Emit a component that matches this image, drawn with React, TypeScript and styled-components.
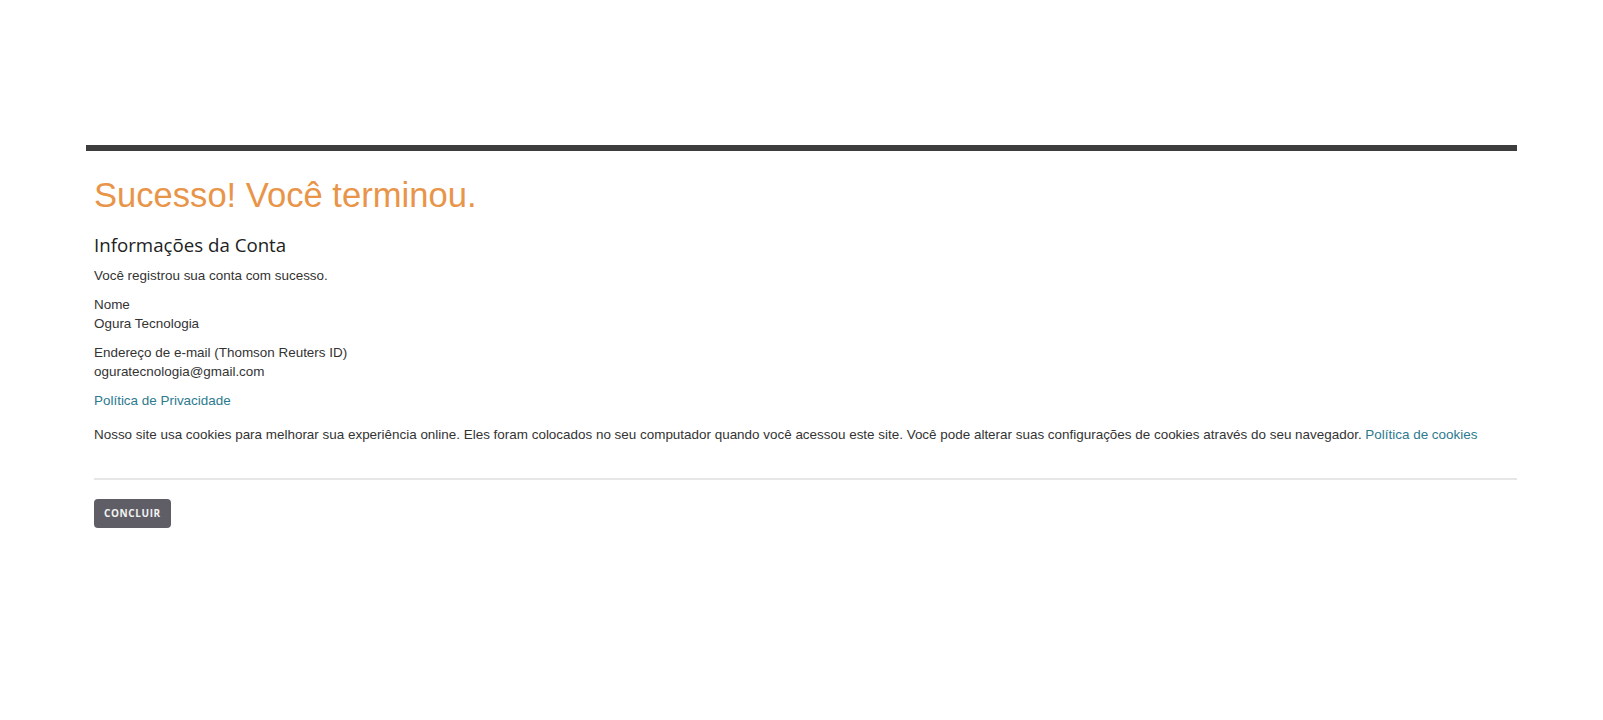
import React from "react";
import styled, { createGlobalStyle } from "styled-components";

const GlobalStyle = createGlobalStyle`
  html, body {
    margin: 0;
    padding: 0;
    background: #ffffff;
  }
  body {
    font-family: "Liberation Sans", Arial, sans-serif;
    color: #333333;
  }
`;

const Page = styled.div`
  padding: 145px 86px 0 86px;
  min-height: 720px;
  box-sizing: border-box;
`;

const Card = styled.section`
  border-top: 6px solid #3d3d3d;
  padding: 0 0 0 8px;
`;

const Title = styled.h1`
  margin: 26px 0 0;
  font-family: "Liberation Sans", Arial, sans-serif;
  font-weight: normal;
  font-size: 34.6px;
  line-height: 36px;
  color: #e8954a;
`;

const SubTitle = styled.h2`
  margin: 19px 0 0;
  font-family: "Open Sans", "Noto Sans", sans-serif;
  font-weight: normal;
  font-size: 18.7px;
  line-height: 26px;
  color: #222222;
`;

const Text = styled.p<{ $gap: number }>`
  margin: ${(p) => p.$gap}px 0 0;
  font-size: 13.45px;
  line-height: 19.5px;
  color: #333333;
`;

const Link = styled.a`
  color: #2b7a8e;
  text-decoration: none;
`;

const Divider = styled.hr`
  margin: 33px 0 0;
  border: 0;
  border-top: 2px solid #e6e6e6;
  height: 0;
`;

const Actions = styled.div`
  display: flex;
  padding-top: 19px;
`;

const Button = styled.button`
  height: 29px;
  padding: 0 10px;
  border: 0;
  border-radius: 4px;
  background: #5f5e66;
  color: #f2f2f2;
  font-family: "Open Sans", "Noto Sans", sans-serif;
  font-weight: 700;
  font-size: 10px;
  letter-spacing: 0.6px;
  text-transform: uppercase;
  cursor: pointer;
`;

export default function App() {
  return (
    <>
      <GlobalStyle />
      <Page>
        <Card>
          <Title>Sucesso! Você terminou.</Title>
          <SubTitle>Informações da Conta</SubTitle>
          <Text $gap={8}>Você registrou sua conta com sucesso.</Text>
          <Text $gap={9}>
            Nome
            <br />
            Ogura Tecnologia
          </Text>
          <Text $gap={9}>
            Endereço de e-mail (Thomson Reuters ID)
            <br />
            oguratecnologia@gmail.com
          </Text>
          <Text $gap={9}>
            <Link href="#">Política de Privacidade</Link>
          </Text>
          <Text $gap={15}>
            Nosso site usa cookies para melhorar sua experiência online. Eles foram colocados no seu computador quando você acessou este site. Você pode alterar suas configurações de cookies através do seu navegador.{" "}
            <Link href="#">Política de cookies</Link>
          </Text>
          <Divider />
          <Actions>
            <Button>Concluir</Button>
          </Actions>
        </Card>
      </Page>
    </>
  );
}
